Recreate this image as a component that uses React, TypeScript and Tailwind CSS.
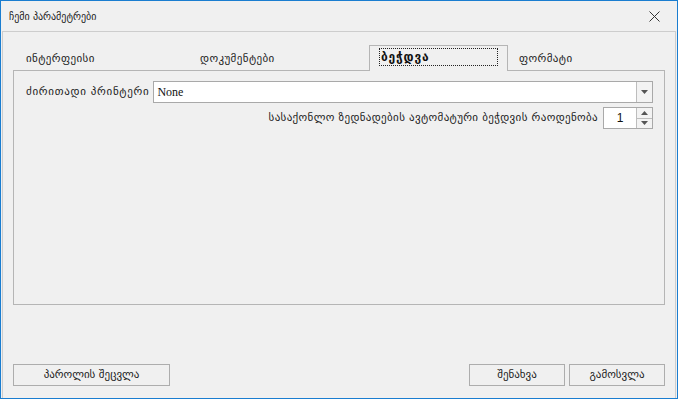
import type { ReactNode } from "react";

const font = "font-['DejaVu_Sans',sans-serif]";

function Tab({
  label,
  width,
  active,
}: {
  label: string;
  width: number;
  active?: boolean;
}) {
  if (active) {
    return (
      <div
        className="relative z-10 flex h-[26px] shrink-0 items-start border border-b-0 border-[#b5b5b5] bg-[#f0f0f0] pl-[9px] pt-[2px]"
        style={{ width }}
      >
        <div className="flex h-[18px] w-[119px] items-center border border-dotted border-[#222] pl-[1px] text-[12px] font-bold tracking-[0.8px] text-[#111]">
          {label}
        </div>
      </div>
    );
  }
  return (
    <div
      className="flex h-[24px] shrink-0 items-center pl-[11px] text-[11px] tracking-[0.4px] text-[#222]"
      style={{ width }}
    >
      {label}
    </div>
  );
}

function Button({ children, width }: { children: ReactNode; width: number }) {
  return (
    <button
      type="button"
      className="flex h-[22px] shrink-0 items-center justify-center border border-[#adadad] bg-[#f0f0f0] text-[11px] text-[#222]"
      style={{ width }}
    >
      {children}
    </button>
  );
}

export default function App() {
  return (
    <div
      className={`${font} flex h-[399px] w-[678px] flex-col border border-[#1a7dd0] bg-[#f0f0f0]`}
    >
      {/* Title bar */}
      <div className="flex h-[30px] shrink-0 items-center justify-between pl-[8px] pr-[17px]">
        <span className="text-[10px] text-[#222]">ჩემი პარამეტრები</span>
        <svg width="11" height="11" viewBox="0 0 11 11">
          <path d="M0.5 0.5 L10.5 10.5 M10.5 0.5 L0.5 10.5" stroke="#333" strokeWidth="1" />
        </svg>
      </div>

      {/* Client area */}
      <div className="mx-px flex flex-1 flex-col border border-b-0 border-[#cdcdcd] px-[10px] pt-[13px] pb-[12px]">
        {/* Tabs */}
        <div className="-mb-px flex items-end pl-[2px]">
          <Tab label="ინტერფეისი" width={174} />
          <Tab label="დოკუმენტები" width={180} />
          <Tab label="ბეჭდვა" width={139} active />
          <Tab label="ფორმატი" width={130} />
        </div>

        {/* Tab panel */}
        <div className="flex h-[235px] flex-col gap-[4px] border border-[#b5b5b5] pl-[12px] pr-[11px] pt-[10px]">
          <div className="flex items-center gap-[4px]">
            <span className="text-[11px] tracking-[0.7px] text-[#222]">ძირითადი პრინტერი</span>
            <div className="flex h-[22px] flex-1 border border-[#a9a9a9] bg-white">
              <div className="flex flex-1 items-center pl-[3px] font-['Liberation_Serif',serif] text-[12px] text-[#111]">
                None
              </div>
              <div className="flex w-[16px] items-center justify-center border-l border-[#bdbdbd] bg-[#f3f3f3]">
                <svg width="7" height="4" viewBox="0 0 7 4">
                  <path d="M0 0 H7 L3.5 4 Z" fill="#555" />
                </svg>
              </div>
            </div>
          </div>

          <div className="flex items-center justify-end gap-[5px]">
            <span className="text-[11px] tracking-[0.35px] text-[#222]">
              სასაქონლო ზედნადების ავტომატური ბეჭდვის რაოდენობა
            </span>
            <div className="flex h-[22px] w-[50px] border border-[#a9a9a9] bg-white">
              <div className="flex flex-1 items-center justify-center font-['Liberation_Sans',sans-serif] text-[12px] text-[#111]">
                1
              </div>
              <div className="flex w-[16px] flex-col border-l border-[#bdbdbd] bg-[#f3f3f3]">
                <div className="flex flex-1 items-center justify-center border-b border-[#bdbdbd]">
                  <svg width="7" height="4" viewBox="0 0 7 4">
                    <path d="M0 4 H7 L3.5 0 Z" fill="#555" />
                  </svg>
                </div>
                <div className="flex flex-1 items-center justify-center">
                  <svg width="7" height="4" viewBox="0 0 7 4">
                    <path d="M0 0 H7 L3.5 4 Z" fill="#555" />
                  </svg>
                </div>
              </div>
            </div>
          </div>
        </div>

        {/* Bottom buttons */}
        <div className="mt-auto flex items-center">
          <Button width={157}>პაროლის შეცვლა</Button>
          <div className="flex-1" />
          <div className="flex gap-[4px]">
            <Button width={96}>შენახვა</Button>
            <Button width={96}>გამოსვლა</Button>
          </div>
        </div>
      </div>
    </div>
  );
}
